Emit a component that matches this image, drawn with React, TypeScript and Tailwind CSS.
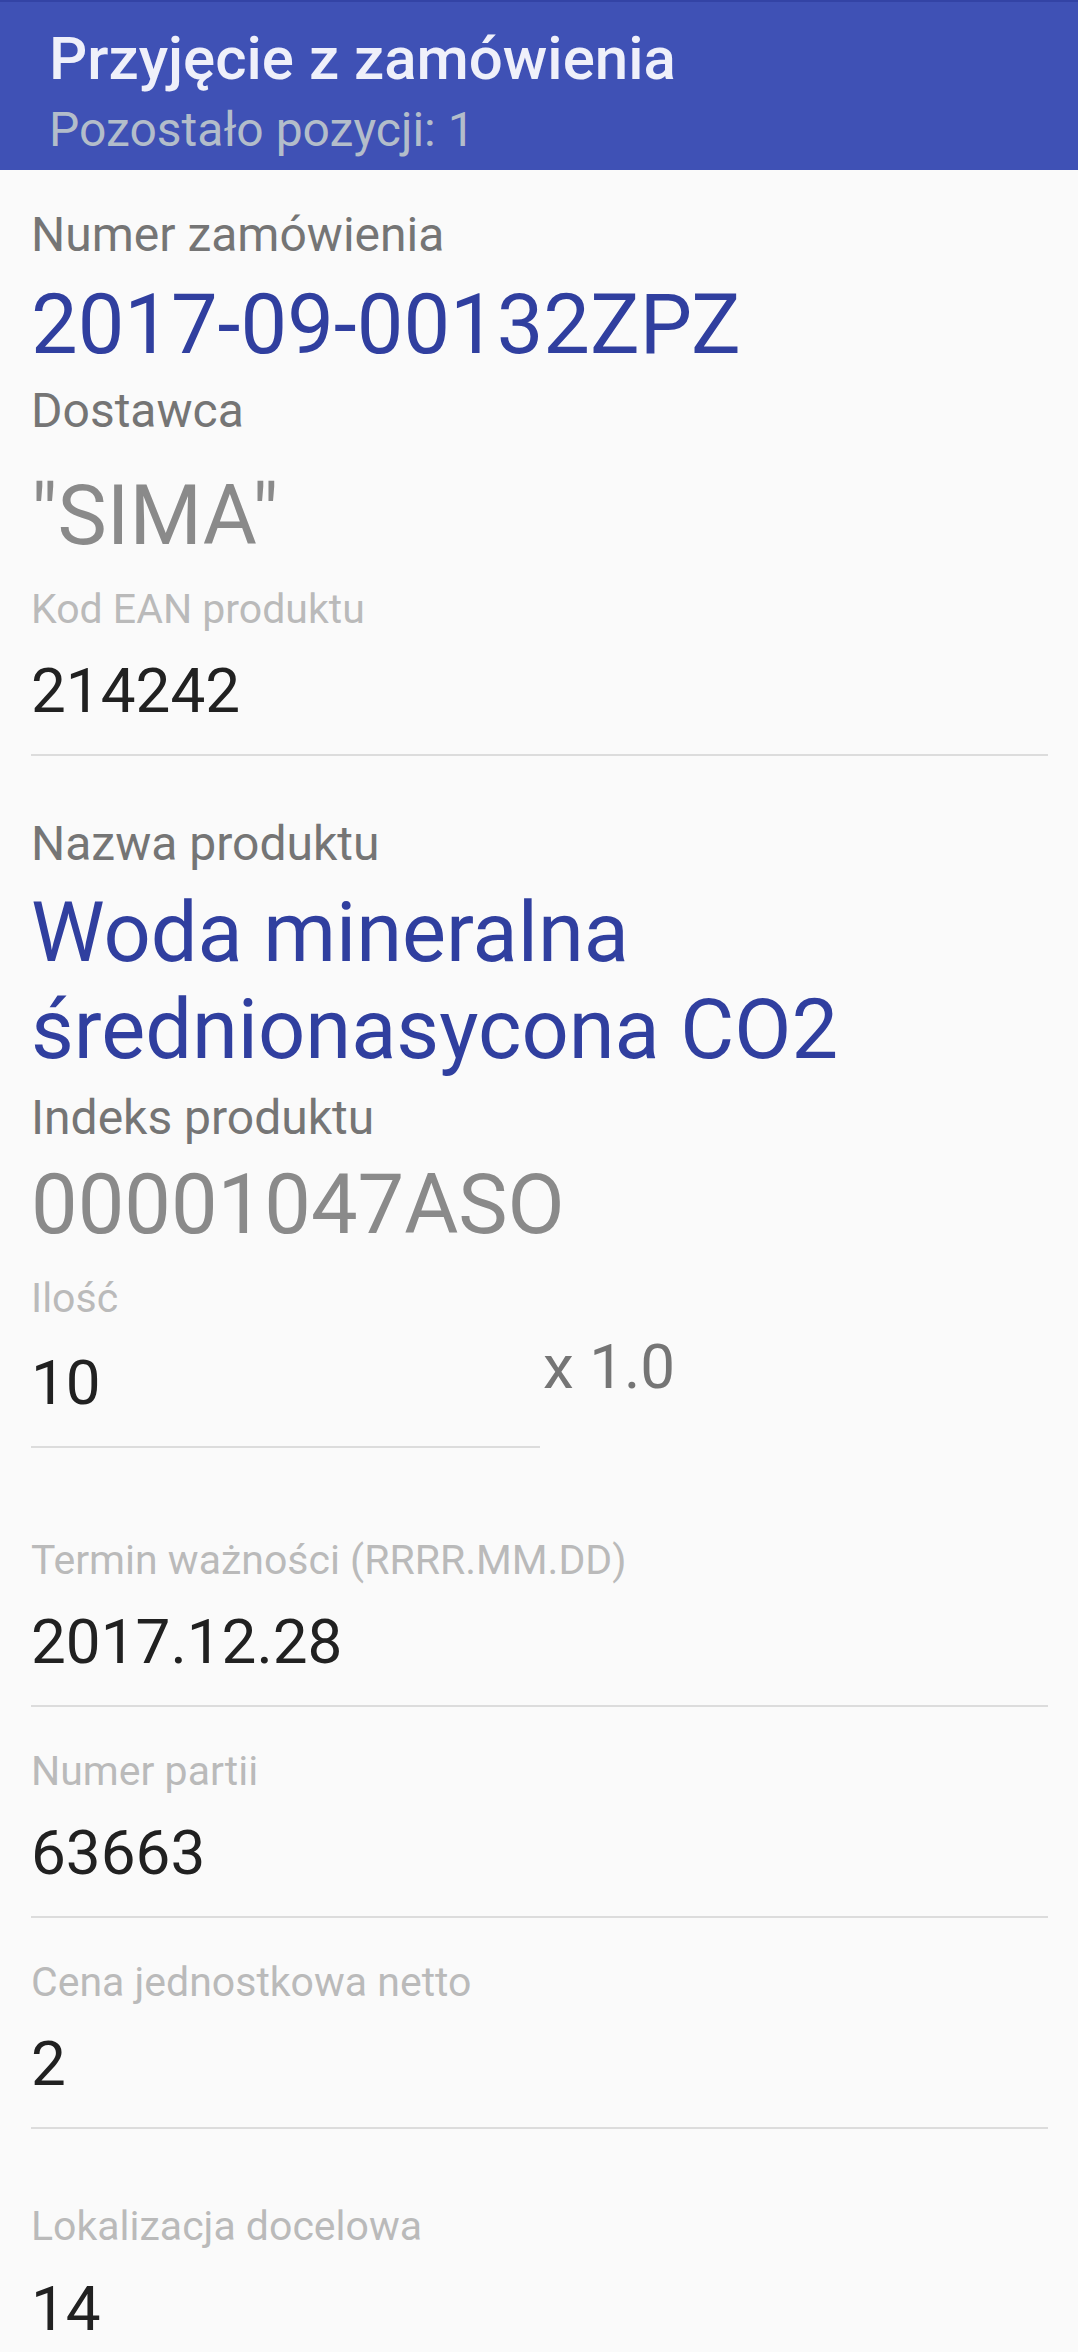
import React from "react";

interface InputFieldProps {
  label: string;
  value: string;
  top: string;
}

function InputField({ label, value, top }: InputFieldProps) {
  return (
    <div className={top}>
      <div className="text-[41px] leading-[48px] text-[#bababa]">{label}</div>
      <div className="mt-[22px] text-[62px] leading-[72px] text-[#212121]">{value}</div>
      <div className="mt-[27px] h-[2px] bg-[#dcdcdc]" />
    </div>
  );
}

export default function App() {
  return (
    <div className="min-h-[2352px] w-[1078px] bg-[#fafafa] font-[Roboto,sans-serif]">
      <header className="h-[170px] border-t-2 border-[#3343a5] bg-[#3f51b5] pl-[49px]">
        <h1 className="pt-[22px] text-[60px] font-medium leading-[70px] text-[#eff0fa]">
          Przyjęcie z zamówienia
        </h1>
        <p className="mt-[8px] text-[48px] leading-[56px] text-[#b3bdca]">Pozostało pozycji: 1</p>
      </header>

      <main className="pl-[31px] pr-[30px]">
        <div className="pt-[37px] text-[48px] leading-[56px] text-[#757575]">Numer zamówienia</div>
        <div className="mt-[12px] text-[83px] leading-[100px] text-[#303f9f]">2017-09-00132ZPZ</div>

        <div className="mt-[8px] text-[48px] leading-[56px] text-[#757575]">Dostawca</div>
        <div className="mt-[27px] text-[83px] leading-[100px] text-[#8a8a8a]">"SIMA"</div>

        <InputField top="mt-[19px]" label="Kod EAN produktu" value="214242" />

        <div className="mt-[60px] text-[48px] leading-[56px] text-[#757575]">Nazwa produktu</div>
        <div className="mt-[12px] text-[83px] leading-[97px] text-[#303f9f]">
          Woda mineralna średnionasycona CO2
        </div>

        <div className="mt-[12px] text-[48px] leading-[56px] text-[#757575]">Indeks produktu</div>
        <div className="mt-[9px] text-[83px] leading-[100px] text-[#8a8a8a]">00001047ASO</div>

        <div className="mt-[19px] text-[41px] leading-[48px] text-[#bababa]">Ilość</div>
        <div className="mt-[9px] flex items-start">
          <div className="w-[509px] pt-[16px]">
            <div className="text-[62px] leading-[72px] text-[#212121]">10</div>
            <div className="mt-[27px] h-[2px] bg-[#dcdcdc]" />
          </div>
          <div className="ml-[3px] text-[62px] leading-[72px] text-[#757575]">x 1.0</div>
        </div>

        <InputField top="mt-[88px]" label="Termin ważności (RRRR.MM.DD)" value="2017.12.28" />
        <InputField top="mt-[40px]" label="Numer partii" value="63663" />
        <InputField top="mt-[40px]" label="Cena jednostkowa netto" value="2" />

        <div className="mt-[73px] text-[41px] leading-[48px] text-[#bababa]">Lokalizacja docelowa</div>
        <div className="mt-[23px] text-[62px] leading-[72px] text-[#212121]">14</div>
      </main>
    </div>
  );
}
